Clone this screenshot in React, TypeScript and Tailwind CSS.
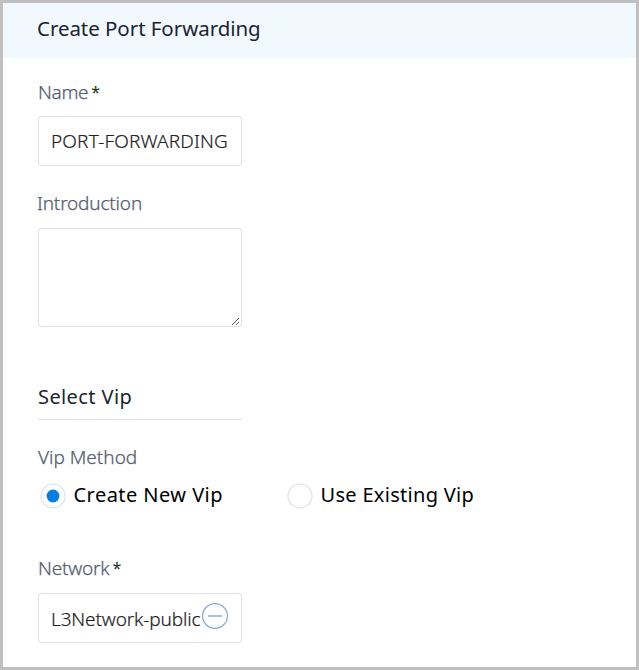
import type { ReactNode } from "react";

function Label({ children, required, spacing }: { children: ReactNode; required?: boolean; spacing: string }) {
  return (
    <div className="flex h-[26px] items-center whitespace-nowrap text-[19px] font-light leading-[26px] text-[#525c70] [-webkit-text-stroke:0.25px_#525c70]">
      <span className={spacing}>{children}</span>
      {required && <span className="ml-[3px] text-[16px] font-normal text-[#14301c] [-webkit-text-stroke:0]">*</span>}
    </div>
  );
}

function Radio({ checked, children, spacing }: { checked?: boolean; children: ReactNode; spacing: string }) {
  return (
    <div className="flex h-7 items-center whitespace-nowrap text-[20px] leading-7 text-black">
      <svg className="mt-[2px] mr-[7.5px] shrink-0" width="26" height="26" viewBox="0 0 26 26" fill="none">
        <circle cx="13" cy="13" r="12" stroke="#dcdfe6" strokeWidth="1.1" />
        {checked && <circle cx="13" cy="13" r="6.4" fill="#0080e0" />}
      </svg>
      <span className={spacing}>{children}</span>
    </div>
  );
}

export default function App() {
  return (
    <div className="h-[670px] w-[639px] overflow-hidden border-[3px] border-[#c0c0c0] bg-white font-['Noto_Sans',sans-serif]">
      <header className="flex h-[55px] items-center bg-[#f1f9ff] pb-[4px] pl-[34px] text-[20.5px] whitespace-nowrap text-[#1b2432]">
        <span className="tracking-[-0.05px]">Create Port Forwarding</span>
      </header>
      <main className="pl-[35px]">
        <div className="pt-[21px]">
          <Label required spacing="tracking-[-0.3px]">Name</Label>
          <div className="mt-[11px] flex h-[50px] w-[204px] items-center rounded-[3px] border border-[#dcdfe6] pl-[12px] text-[19px] font-light whitespace-nowrap text-[#222] [-webkit-text-stroke:0.2px_#222]">
            <span className="tracking-[0.16px]">PORT-FORWARDING</span>
          </div>
        </div>
        <div className="pt-[24px]">
          <Label spacing="-ml-px tracking-[-0.18px]">Introduction</Label>
          <div className="mt-[12px] flex h-[99px] w-[204px] items-end justify-end rounded-[3px] border border-[#dcdfe6] pr-px pb-px">
            <svg width="8" height="8" viewBox="0 0 8 8" fill="#555" shapeRendering="crispEdges">
              <path d="M0 7h1v1h-1zM1 6h1v1h-1zM2 5h1v1h-1zM3 4h1v1h-1zM4 3h1v1h-1zM5 2h1v1h-1zM6 1h1v1h-1zM4 7h1v1h-1zM5 6h1v1h-1zM6 5h1v1h-1z" />
            </svg>
          </div>
        </div>
        <h2 className="mt-[56px] flex h-[37px] w-[204px] items-start border-b border-[#dcdfe6] text-[20px] leading-7 whitespace-nowrap text-[#1b2432]">
          <span className="tracking-[0.4px]">Select Vip</span>
        </h2>
        <div className="pt-[24px]">
          <Label spacing="tracking-[0px]">Vip Method</Label>
          <div className="mt-[11px] ml-[2px] grid grid-cols-[247px_auto] justify-start">
            <Radio checked spacing="tracking-[0.45px]">Create New Vip</Radio>
            <Radio spacing="tracking-[0.3px]">Use Existing Vip</Radio>
          </div>
        </div>
        <div className="pt-[46px]">
          <Label required spacing="tracking-[-0.2px]">Network</Label>
          <div className="mt-[12px] flex h-[50px] w-[204px] items-center rounded-[3px] border border-[#dcdfe6] pl-[12px] text-[19px] font-light whitespace-nowrap text-[#222] [-webkit-text-stroke:0.2px_#222]">
            <span className="w-[150px] pt-[2px] tracking-[-0.13px]">L3Network-public</span>
            <svg className="mb-[4px] shrink-0" width="28" height="28" viewBox="0 0 28 28" fill="none" stroke="#82a8d8">
              <circle cx="14" cy="14" r="12.4" strokeWidth="1.2" />
              <path d="M7 14H21" stroke="#9fbee3" strokeWidth="1.8" />
            </svg>
          </div>
        </div>
      </main>
    </div>
  );
}
